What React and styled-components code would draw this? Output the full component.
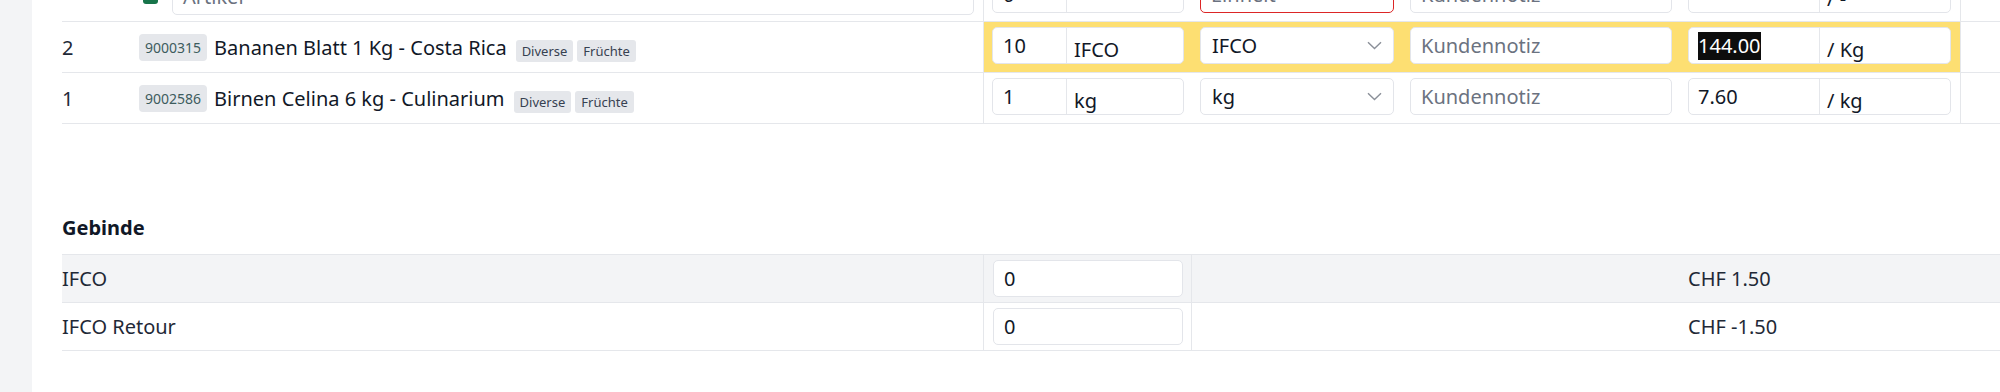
import React from 'react';
import styled, { createGlobalStyle, css } from 'styled-components';

const rows = [
  { pos: 2, code: '9000315', name: 'Bananen Blatt 1 Kg - Costa Rica', qty: '10', unit: 'IFCO', price: '144.00', per: '/ Kg', active: true },
  { pos: 1, code: '9002586', name: 'Birnen Celina 6 kg - Culinarium', qty: '1', unit: 'kg', price: '7.60', per: '/ kg' },
];

const containers = [
  { name: 'IFCO', qty: '0', price: 'CHF 1.50' },
  { name: 'IFCO Retour', qty: '0', price: 'CHF -1.50' },
];

const Chevron = () => (
  <svg width="15" height="9" viewBox="0 0 15 9" fill="none">
    <path d="M1 1.2 L7.5 7.6 L14 1.2" stroke="#8b9099" strokeWidth="1.4" />
  </svg>
);

function App() {
  return (
    <>
      <GlobalStyle />
      <Page>
        <Sidebar />
        <Main>
          <Row>
            <ProductCell>
              <CheckBox>
                <svg width="10" height="8" viewBox="0 0 10 8" fill="none">
                  <path d="M1 4 L4 7 L9 1" stroke="#fff" strokeWidth="1.8" />
                </svg>
              </CheckBox>
              <Field $wide $placeholder>Artikel</Field>
            </ProductCell>
            <InputsCell>
              <Group $w={192}>
                <GroupValue $w={74}>0</GroupValue>
                <Addon />
              </Group>
              <Field $w={194} $invalid $placeholder>Einheit</Field>
              <Field $w={262} $placeholder>Kundennotiz</Field>
              <Group $w={263}>
                <GroupValue $w={131} />
                <Addon>/ -</Addon>
              </Group>
            </InputsCell>
            <EndCell />
          </Row>

          {rows.map((r) => (
            <Row key={r.code}>
              <ProductCell>
                <Pos>{r.pos}</Pos>
                <Code>{r.code}</Code>
                <Name>{r.name}</Name>
                <Tags>
                  <Tag>Diverse</Tag>
                  <Tag>Früchte</Tag>
                </Tags>
              </ProductCell>
              <InputsCell $active={r.active}>
                <Group $w={192}>
                  <GroupValue $w={74}>{r.qty}</GroupValue>
                  <Addon>{r.unit}</Addon>
                </Group>
                <Select $w={194}>
                  <span>{r.unit}</span>
                  <Chevron />
                </Select>
                <Field $w={262} $placeholder>Kundennotiz</Field>
                <Group $w={263}>
                  <GroupValue $w={131} $pad={9}>
                    {r.active ? <Selected>{r.price}</Selected> : r.price}
                  </GroupValue>
                  <Addon>{r.per}</Addon>
                </Group>
              </InputsCell>
              <EndCell />
            </Row>
          ))}

          <SectionTitle>Gebinde</SectionTitle>
          <ContainerTable>
            {containers.map((c, i) => (
              <ContainerRow key={c.name} $striped={i % 2 === 0}>
                <ContainerName>{c.name}</ContainerName>
                <ContainerQty>
                  <Field $w={190}>{c.qty}</Field>
                </ContainerQty>
                <Spacer />
                <ContainerPrice>{c.price}</ContainerPrice>
              </ContainerRow>
            ))}
          </ContainerTable>
        </Main>
      </Page>
    </>
  );
}

export default App;

const GlobalStyle = createGlobalStyle`
  html, body {
    margin: 0;
    padding: 0;
    background: #fff;
  }
  body {
    font-family: "Noto Sans", "Open Sans", sans-serif;
    color: #111827;
    overflow: hidden;
  }
  * {
    box-sizing: border-box;
  }
`;

const Page = styled.div`
  display: flex;
  height: 392px;
  overflow: hidden;
`;

const Sidebar = styled.div`
  width: 32px;
  flex-shrink: 0;
  background: #f3f4f6;
`;

/* the list is scrolled a little: the draft row sits partly above the top edge */
const Main = styled.div`
  flex: 1;
  min-width: 0;
  padding-left: 30px;
  margin-top: -29px;
`;

const Row = styled.div`
  display: grid;
  grid-template-columns: 921px 977px 1fr;
  height: 51px;
  border-bottom: 1px solid #e5e7eb;
`;

const ProductCell = styled.div`
  display: flex;
  align-items: center;
  min-width: 0;
`;

const CheckBox = styled.div`
  width: 15px;
  height: 15px;
  margin-left: 81px;
  margin-right: 14px;
  border-radius: 3px;
  background: #17744a;
  display: flex;
  align-items: center;
  justify-content: center;
`;

const Pos = styled.div`
  width: 77px;
  font-size: 20px;
  color: #1f2937;
`;

const Code = styled.div`
  height: 27px;
  padding: 0 6px;
  display: flex;
  align-items: center;
  border-radius: 4px;
  background: #e5e7eb;
  color: #3d5c5e;
  font-size: 14px;
`;

const Name = styled.div`
  margin-left: 7px;
  font-size: 20px;
  color: #111827;
  white-space: nowrap;
`;

const Tags = styled.div`
  display: flex;
  gap: 4px;
  margin: 7px 0 0 9px;
`;

const Tag = styled.div`
  height: 22px;
  padding: 0 6px;
  display: flex;
  align-items: center;
  border-radius: 3px;
  background: #e5e7eb;
  color: #374151;
  font-size: 13px;
`;

const InputsCell = styled.div`
  display: flex;
  align-items: flex-start;
  gap: 16px;
  padding: 5px 8px 0;
  border-left: 1px solid #e5e7eb;
  background: ${(p) => (p.$active ? '#fddf72' : 'transparent')};
`;

const EndCell = styled.div`
  border-left: 1px solid #e5e7eb;
`;

const box = css`
  height: 37px;
  border: 1px solid #e3e5ea;
  border-radius: 5px;
  background: #fff;
  font-size: 20px;
`;

const Field = styled.div`
  ${box};
  width: ${(p) => (p.$wide ? '802px' : `${p.$w}px`)};
  flex-shrink: 0;
  display: flex;
  align-items: center;
  padding-left: 10px;
  color: ${(p) => (p.$placeholder ? '#6b7280' : '#111827')};
  border-color: ${(p) => (p.$invalid ? '#dc2626' : '#e3e5ea')};
`;

const Group = styled.div`
  ${box};
  width: ${(p) => p.$w}px;
  flex-shrink: 0;
  display: flex;
  overflow: hidden;
`;

const GroupValue = styled.div`
  width: ${(p) => p.$w}px;
  display: flex;
  align-items: center;
  padding-left: ${(p) => p.$pad || 10}px;
  border-right: 1px solid #e5e7eb;
`;

const Addon = styled.div`
  flex: 1;
  display: flex;
  align-items: center;
  padding: 7px 0 0 7px;
  color: #111827;
`;

const Selected = styled.span`
  background: #0d0d0d;
  color: #fff;
  line-height: 28px;
`;

const Select = styled.div`
  ${box};
  width: ${(p) => p.$w}px;
  flex-shrink: 0;
  display: flex;
  align-items: center;
  justify-content: space-between;
  padding: 0 11px 0 11px;
`;

const SectionTitle = styled.div`
  margin-top: 90px;
  margin-bottom: 12px;
  font-size: 20px;
  line-height: 28px;
  font-weight: 700;
  color: #111827;
`;

const ContainerTable = styled.div`
  border-top: 1px solid #e5e7eb;
`;

const ContainerRow = styled.div`
  display: grid;
  grid-template-columns: 921px 208px 489px 1fr;
  height: 48px;
  border-bottom: 1px solid #e5e7eb;
  background: ${(p) => (p.$striped ? '#f3f4f6' : '#fff')};
  font-size: 20px;
  color: #1f2937;
`;

const ContainerName = styled.div`
  display: flex;
  align-items: center;
`;

const ContainerQty = styled.div`
  display: flex;
  align-items: center;
  padding-left: 9px;
  border-left: 1px solid #e5e7eb;
`;

const Spacer = styled.div`
  border-left: 1px solid #e5e7eb;
`;

const ContainerPrice = styled.div`
  display: flex;
  align-items: center;
  padding-left: 8px;
`;
